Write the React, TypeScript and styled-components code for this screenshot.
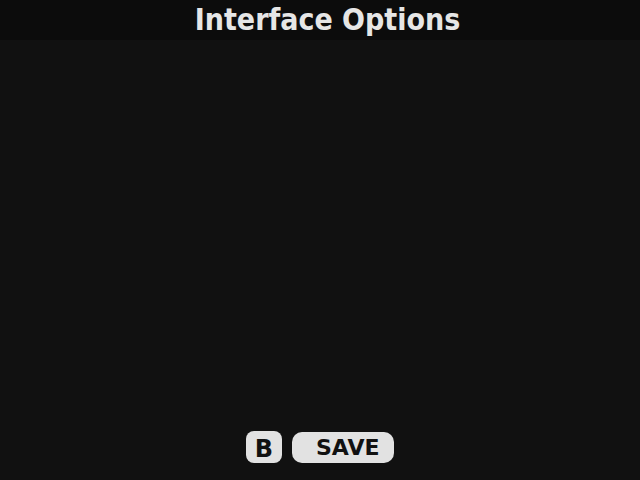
import React from "react";
import styled, { createGlobalStyle } from "styled-components";

const Global = createGlobalStyle`
  html, body { margin: 0; padding: 0; background: #111111; }
  #root { height: 480px; }
`;

const Screen = styled.div`
  width: 640px;
  height: 480px;
  background: #111111;
  display: flex;
  flex-direction: column;
  font-family: "DejaVu Sans", sans-serif;
`;

const Header = styled.header`
  height: 40px;
  background: #0c0c0c;
  display: flex;
  align-items: center;
  justify-content: center;
  padding-left: 15px;
`;

const Title = styled.h1`
  margin: 0;
  color: #e6e6e6;
  font-size: 30px;
  font-weight: bold;
  font-family: "DejaVu Sans Condensed", "DejaVu Sans", sans-serif;
  font-stretch: condensed;
  line-height: 1;
`;

const Body = styled.main`
  flex: 1;
`;

const Footer = styled.footer`
  display: flex;
  justify-content: center;
  align-items: center;
  gap: 10px;
  padding-bottom: 17px;
`;

const KeyBadge = styled.div`
  width: 36px;
  height: 32px;
  border-radius: 8px;
  background: #e2e2e2;
  color: #111;
  display: flex;
  align-items: center;
  justify-content: center;
  font-family: "DejaVu Sans", sans-serif;
  font-weight: bold;
  font-size: 24px;
  padding-top: 3px;
  box-sizing: border-box;
`;

const ActionButton = styled.div`
  width: 102px;
  height: 31px;
  border-radius: 10px;
  background: #e2e2e2;
  color: #111;
  display: flex;
  align-items: center;
  padding-left: 24px;
  padding-top: 1px;
  box-sizing: border-box;
  font-family: "DejaVu Sans", sans-serif;
  font-weight: bold;
  font-size: 22px;
`;

export default function App() {
  return (
    <>
      <Global />
      <Screen>
        <Header>
          <Title>Interface Options</Title>
        </Header>
        <Body />
        <Footer>
          <KeyBadge>B</KeyBadge>
          <ActionButton>SAVE</ActionButton>
        </Footer>
      </Screen>
    </>
  );
}
